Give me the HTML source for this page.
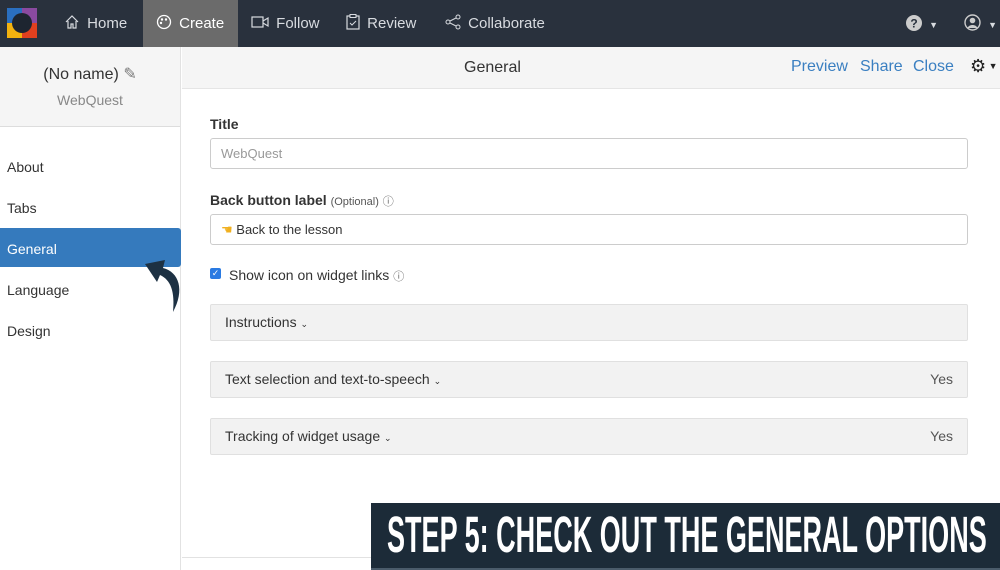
<!DOCTYPE html>
<html><head><style>
*{box-sizing:border-box;margin:0;padding:0}
body{width:1000px;height:570px;overflow:hidden;background:#fff;font-family:"Liberation Sans",sans-serif;position:relative;color:#333}
.nav{position:absolute;left:0;top:0;width:1000px;height:47px;background:#29313d}
.nav .it{position:absolute;top:0;height:47px;line-height:47px;color:#d8dbe0;font-size:15px;word-spacing:3px}
.side{position:absolute;left:0;top:47px;width:181px;height:523px;border-right:1px solid #e2e2e2;background:#fff}
.sidehead{height:80px;background:#f5f5f5;border-bottom:1px solid #ddd;text-align:center}
.menu{position:absolute;left:7px;font-size:14px;color:#333}
.top{position:absolute;left:182px;top:47px;width:818px;height:42px;background:#f5f5f5;border-bottom:1px solid #e5e5e5}
.lbl{position:absolute;left:210px;font-size:14px;font-weight:bold;color:#333}
.inp{position:absolute;left:210px;width:758px;height:31px;border:1px solid #ccc;border-radius:3px;font-size:13px;padding-left:10px;line-height:29px}
.acc{position:absolute;left:210px;width:758px;height:37px;background:#f2f2f2;border:1px solid #e0e0e0;border-radius:2px;font-size:14px;line-height:35px;padding-left:14px;color:#333}
.acc .y{position:absolute;right:14px;top:0;color:#555}
.link{position:absolute;top:58px;font-size:16px;color:#3a7fc1}
</style></head><body>
<div class="nav">
 <svg style="position:absolute;left:7px;top:8px" width="30" height="30" viewBox="0 0 30 30">
  <rect x="0" y="0" width="15" height="15" fill="#2a6fc0"/><rect x="15" y="0" width="15" height="15" fill="#8a4aa0"/>
  <rect x="0" y="15" width="15" height="15" fill="#f2b20f"/><rect x="15" y="15" width="15" height="15" fill="#e0401f"/>
  <circle cx="15" cy="15" r="10" fill="#1d2530"/>
 </svg>
 <div class="it" style="left:64px"><svg width="16" height="16" viewBox="0 0 16 16" style="vertical-align:-2px"><path d="M2 8L8 2l6 6M4 7v7h3v-4h2v4h3V7" fill="none" stroke="#d8dbe0" stroke-width="1.2"/></svg> Home</div>
 <div class="it" style="left:143px;width:95px;background:#6b6b6b;padding-left:13px;color:#fff"><svg width="16" height="16" viewBox="0 0 16 16" style="vertical-align:-2px"><circle cx="8" cy="8" r="6.5" fill="none" stroke="#fff" stroke-width="1.3"/><circle cx="6" cy="5.5" r="1.2" fill="#fff"/><circle cx="10" cy="5.5" r="1.2" fill="#fff"/><circle cx="5" cy="9" r="1.2" fill="#fff"/></svg> Create</div>
 <div class="it" style="left:251px"><svg width="18" height="14" viewBox="0 0 18 14" style="vertical-align:-1px"><rect x="1" y="2" width="11" height="10" fill="none" stroke="#d8dbe0" stroke-width="1.2"/><path d="M12 6l5-3v8l-5-3" fill="none" stroke="#d8dbe0" stroke-width="1.2"/></svg> Follow</div>
 <div class="it" style="left:346px"><svg width="14" height="16" viewBox="0 0 14 16" style="vertical-align:-2px"><rect x="1" y="2" width="12" height="13" fill="none" stroke="#d8dbe0" stroke-width="1.2"/><rect x="4" y="0.5" width="6" height="3" fill="#29313d" stroke="#d8dbe0"/><path d="M4 9l2 2 4-4" fill="none" stroke="#d8dbe0"/></svg> Review</div>
 <div class="it" style="left:445px"><svg width="16" height="16" viewBox="0 0 16 16" style="vertical-align:-2px"><circle cx="3" cy="8" r="2" fill="none" stroke="#d8dbe0"/><circle cx="13" cy="3" r="2" fill="none" stroke="#d8dbe0"/><circle cx="13" cy="13" r="2" fill="none" stroke="#d8dbe0"/><path d="M5 7l6-3M5 9l6 3" stroke="#d8dbe0"/></svg> Collaborate</div>
 <div class="it" style="left:906px"><svg width="16" height="16" viewBox="0 0 16 16" style="vertical-align:-3px"><circle cx="8" cy="8" r="8" fill="#ccc"/><text x="8" y="12.5" font-size="12" font-weight="bold" text-anchor="middle" fill="#29313d" font-family="Liberation Sans">?</text></svg> <span style="font-size:9px">▼</span></div>
 <div class="it" style="left:964px"><svg width="17" height="17" viewBox="0 0 17 17" style="vertical-align:-3px"><circle cx="8.5" cy="8.5" r="7.5" fill="none" stroke="#ccc" stroke-width="1.4"/><circle cx="8.5" cy="6.5" r="2.8" fill="#ccc"/><path d="M3.5 14c1.5-4 8.5-4 10 0" fill="#ccc"/></svg> <span style="font-size:9px">▼</span></div>
</div>
<div class="side">
 <div class="sidehead">
  <div style="padding-top:17px;font-size:16px;color:#333">(No name) <span style="color:#777">✎</span></div>
  <div style="padding-top:8px;font-size:14px;color:#888">WebQuest</div>
 </div>
</div>
<div class="menu" style="top:159px">About</div>
<div class="menu" style="top:200px">Tabs</div>
<div style="position:absolute;left:0;top:228px;width:181px;height:39px;background:#357abd;border-radius:0 3px 3px 0"></div>
<div class="menu" style="top:241px;color:#fff">General</div>
<div class="menu" style="top:282px">Language</div>
<div class="menu" style="top:323px">Design</div>
<svg style="position:absolute;left:143px;top:250px" width="42" height="64" viewBox="0 0 42 64"><path d="M30 62C42 40 36 22 20 18L22 10 2 14 14 32 17 25C28 30 32 42 30 62Z" fill="#1d3143"/></svg>
<div class="top"><div style="position:absolute;left:282px;top:12px;font-size:16px;color:#333">General</div></div>
<div class="link" style="left:791px">Preview</div>
<div class="link" style="left:860px">Share</div>
<div class="link" style="left:913px">Close</div>
<div style="position:absolute;left:970px;top:56px;font-size:18px;color:#222">⚙<span style="font-size:9px;vertical-align:3px"> ▼</span></div>
<div class="lbl" style="top:116px">Title</div>
<div class="inp" style="top:138px;color:#999">WebQuest</div>
<div class="lbl" style="top:192px">Back button label <span style="font-size:11px;font-weight:normal;color:#555">(Optional)</span> <span style="font-weight:normal;font-size:11px;color:#666">ⓘ</span></div>
<div class="inp" style="top:214px;color:#333"><span style="color:#f0b020">☚</span> Back to the lesson</div>
<div style="position:absolute;left:210px;top:268px;width:11px;height:11px;background:#2a7ae2;border-radius:2px;color:#fff;font-size:9px;line-height:11px;text-align:center">✓</div>
<div style="position:absolute;left:229px;top:267px;font-size:14px">Show icon on widget links <span style="font-size:11px;color:#666">ⓘ</span></div>
<div class="acc" style="top:304px">Instructions <span style="font-size:9px">⌄</span></div>
<div class="acc" style="top:361px">Text selection and text-to-speech <span style="font-size:9px">⌄</span><span class="y">Yes</span></div>
<div class="acc" style="top:418px">Tracking of widget usage <span style="font-size:9px">⌄</span><span class="y">Yes</span></div>
<div style="position:absolute;left:182px;top:557px;width:200px;height:1px;background:#e2e2e2"></div>
<div style="position:absolute;left:371px;top:503px;width:629px;height:67px;background:#1c2b38;border-bottom:2px solid #4a5b6a"></div>
<div style="position:absolute;left:387px;top:507px;font-family:'Liberation Sans Narrow','Liberation Sans',sans-serif;font-weight:bold;font-size:51px;line-height:56px;color:#fff;transform:scaleX(0.53);transform-origin:left top;white-space:nowrap">STEP 5: CHECK OUT THE GENERAL OPTIONS</div>
</body></html>
